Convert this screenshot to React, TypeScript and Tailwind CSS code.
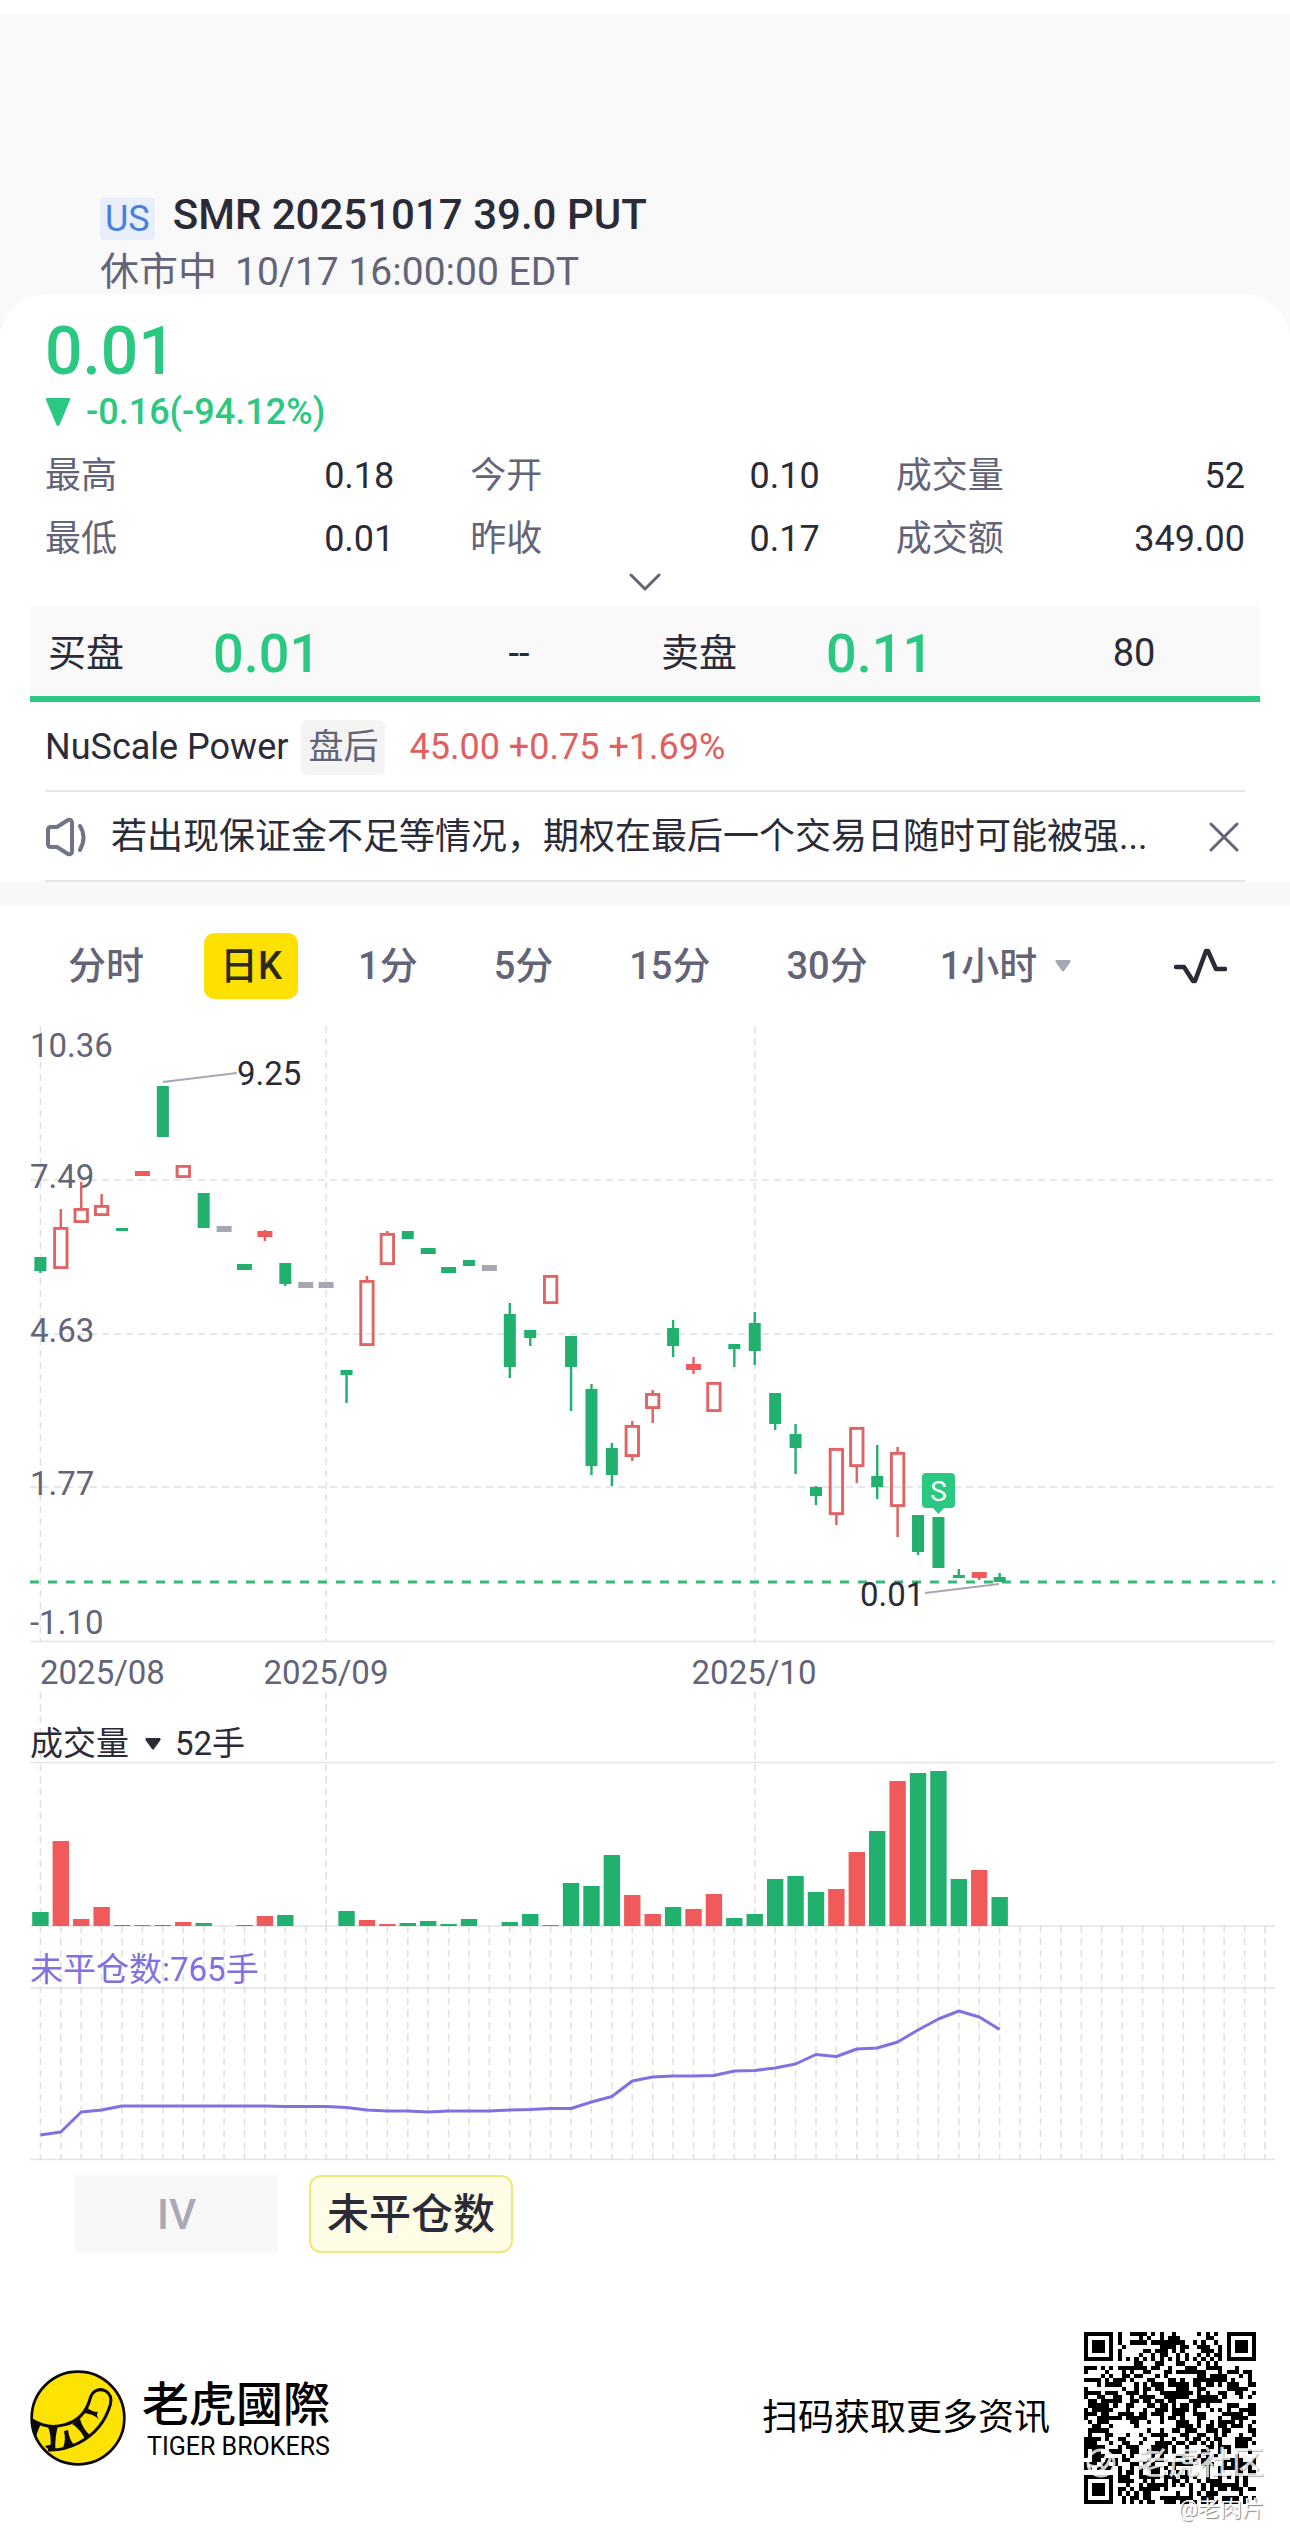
import { useState } from "react";

const INK = "#2b2b38";
const MUTED = "#646478";
const UP = "#f05a5a";
const UP_LINE = "#e16464";
const DOWN = "#21b06e";
const FLAT = "#a5a8b3";
const GRID = "#dedfe2";

type Tone = "up" | "down" | "flat";

interface Candle {
  tone: Tone;
  high: number;
  top: number;
  bottom: number;
  low: number;
  thin?: boolean; // body too short to be drawn hollow
}

const c = (tone: Tone, high: number, top: number, bottom: number, low: number, thin = false): Candle => ({
  tone, high, top, bottom, low, thin,
});

// y positions inside the chart's viewBox, one entry per trading day
const candles: Candle[] = [
  c("down", 1257, 1257, 1271, 1273),
  c("up", 1209, 1227, 1269, 1269),
  c("up", 1182, 1208, 1223, 1223),
  c("up", 1194, 1205, 1216, 1216),
  c("down", 1228, 1228, 1231, 1231),
  c("up", 1171, 1171, 1176, 1176, true),
  c("down", 1086, 1086, 1137, 1137),
  c("up", 1165, 1165, 1178, 1178),
  c("down", 1193, 1193, 1228, 1228),
  c("flat", 1226, 1226, 1232, 1232, true),
  c("down", 1264, 1264, 1270, 1270, true),
  c("up", 1230, 1231, 1237, 1241, true),
  c("down", 1263, 1263, 1284, 1286),
  c("flat", 1282, 1282, 1288, 1288, true),
  c("flat", 1282, 1282, 1288, 1288, true),
  c("down", 1370, 1370, 1375, 1403),
  c("up", 1276, 1280, 1346, 1346),
  c("up", 1231, 1233, 1265, 1265),
  c("down", 1231, 1231, 1239, 1239),
  c("down", 1248, 1248, 1254, 1254, true),
  c("down", 1267, 1267, 1273, 1273, true),
  c("down", 1260, 1260, 1266, 1266),
  c("flat", 1265, 1265, 1271, 1271, true),
  c("down", 1303, 1314, 1367, 1378),
  c("down", 1330, 1330, 1338, 1346),
  c("up", 1275, 1275, 1304, 1304),
  c("down", 1336, 1336, 1367, 1411),
  c("down", 1384, 1389, 1466, 1475),
  c("down", 1443, 1448, 1475, 1486),
  c("up", 1421, 1425, 1457, 1461),
  c("up", 1390, 1393, 1409, 1423),
  c("down", 1320, 1328, 1346, 1357),
  c("up", 1357, 1364, 1370, 1374, true),
  c("up", 1382, 1382, 1412, 1412),
  c("down", 1344, 1344, 1349, 1367),
  c("down", 1312, 1323, 1351, 1365),
  c("down", 1393, 1393, 1424, 1430),
  c("down", 1424, 1434, 1448, 1474),
  c("down", 1486, 1487, 1496, 1505),
  c("up", 1448, 1448, 1515, 1525),
  c("up", 1427, 1427, 1467, 1483),
  c("down", 1445, 1476, 1487, 1499),
  c("up", 1447, 1452, 1507, 1537),
  c("down", 1515, 1515, 1552, 1555),
  c("down", 1517, 1517, 1568, 1568),
  c("down", 1569, 1575, 1578, 1578),
  c("up", 1572, 1572, 1578, 1580, true),
  c("down", 1573, 1577, 1582, 1582),
];

const volumes = [
  14, 85, 7, 19, 1, 1, 1, 4, 3, 0, 1, 10, 11, 0, 0, 15, 6, 2, 3, 5, 2, 7, 0, 4,
  12, 1, 43, 40, 71, 31, 12, 19, 17, 32, 8, 12, 47, 50, 34, 37, 74, 95, 145, 153, 155, 47, 56, 29,
];

const openInterest = [
  2135, 2132, 2112, 2110, 2106, 2106, 2106, 2106, 2106, 2106, 2106, 2106, 2106.5, 2106.5, 2106.5, 2107.5,
  2110, 2111, 2111, 2112, 2111, 2111, 2111, 2110, 2109.5, 2108.5, 2108.5, 2102, 2096.5, 2081, 2077, 2076,
  2076, 2075.5, 2071, 2070.5, 2068, 2064, 2054.5, 2056.5, 2049, 2048, 2042, 2030, 2019, 2011, 2017, 2029.5,
];

const slotX = (i: number) => 40.4 + i * 20.41;
const slots = Array.from({ length: 61 }, (_, i) => i);
const monthSlots = [0, 14, 35];

const stats = [
  { label: "最高", value: "0.18" },
  { label: "今开", value: "0.10" },
  { label: "成交量", value: "52" },
  { label: "最低", value: "0.01" },
  { label: "昨收", value: "0.17" },
  { label: "成交额", value: "349.00" },
];

const periods = ["分时", "日K", "1分", "5分", "15分", "30分"];

const notice = "若出现保证金不足等情况\uFF0C期权在最后一个交易日随时可能被强...";

function CandleMark({ candle, x }: { candle: Candle; x: number }) {
  const { tone, high, top, bottom, low, thin } = candle;
  if (tone === "up" && !thin) {
    return (
      <g stroke={UP_LINE} fill="none">
        <path d={`M${x} ${high}V${top}M${x} ${bottom}V${low}`} strokeWidth={2.5} />
        <rect x={x - 6.2} y={top + 1.4} width={12.4} height={bottom - top - 2.8} strokeWidth={2.9} />
      </g>
    );
  }
  const color = tone === "up" ? UP : tone === "down" ? DOWN : FLAT;
  const half = thin ? 7.5 : 6;
  return (
    <g fill={color}>
      <rect x={x - 1.2} y={high} width={2.4} height={low - high} />
      <rect x={x - half} y={top} width={half * 2} height={bottom - top} />
    </g>
  );
}

function Charts() {
  return (
    <svg viewBox="0 1020 1290 1144" className="block w-full" fontSize={33} fill={MUTED}>
      {/* price grid */}
      <g stroke={GRID} strokeWidth={1.5} strokeDasharray="7 5">
        {monthSlots.map((i) => (
          <path key={i} d={`M${slotX(i)} 1026V1641M${slotX(i)} 1692V1926`} />
        ))}
        <path d="M30 1180H1275M30 1334H1275M30 1487H1275" />
      </g>
      <path d="M30 1641.5H1275M30 1762.5H1275M30 1926H1275M30 1988H1275M30 2159.5H1275" stroke="#e3e4e6" strokeWidth={1.3} />

      <text x={30} y={1057}>10.36</text>
      <text x={30} y={1188}>7.49</text>
      <text x={30} y={1342}>4.63</text>
      <text x={30} y={1495}>1.77</text>
      <text x={30} y={1634}>-1.10</text>
      <text x={40} y={1684}>2025/08</text>
      <text x={326} y={1684} textAnchor="middle">2025/09</text>
      <text x={754} y={1684} textAnchor="middle">2025/10</text>

      <path d="M30 1582H1275" stroke="#35b87b" strokeWidth={3} strokeDasharray="9 9" />
      {candles.map((candle, i) => (
        <CandleMark key={i} candle={candle} x={slotX(i)} />
      ))}

      <path d="M163 1082L237 1073M925 1593L999 1584" stroke={FLAT} strokeWidth={2.2} />
      <text x={237} y={1085} fill={INK}>9.25</text>
      <text x={860} y={1606} fill={INK}>0.01</text>

      {/* sell marker */}
      <path d="M926 1473H951Q955 1473 955 1477V1504Q955 1508 951 1508H944L938.500 1514L933 1508H926Q922 1508 922 1504V1477Q922 1473 926 1473Z" fill="#2bc882" />
      <text x={938.5} y={1501} fontSize={28} fill="#fff" textAnchor="middle">S</text>

      {/* volume */}
      {volumes.map((v, i) => (
        <rect key={i} x={slotX(i) - 8.2} y={1926 - v} width={16.4} height={v} fill={candles[i].tone === "up" ? UP : DOWN} />
      ))}

      {/* open interest */}
      <g stroke={GRID} strokeWidth={1.5} strokeDasharray="7 5">
        {slots.map((i) => (
          <path key={i} d={`M${slotX(i)} 1926V2160`} />
        ))}
      </g>
      <text x={30} y={1981} fill="#8070e0">未平仓数:765手</text>
      <polyline
        points={openInterest.map((y, i) => `${slotX(i)},${y}`).join(" ")}
        fill="none"
        stroke="#8070e0"
        strokeWidth={3}
        strokeLinejoin="round"
      />
    </svg>
  );
}

function TigerLogo() {
  return (
    <svg viewBox="90 90 288 288" className="size-24">
      <circle cx="234" cy="234" r="139" fill="#fce303" stroke="#0b0808" strokeWidth="8" />
      <path
        d="M97 240C125 258 160 264 195 254C240 242 262 208 271 174C278 150 300 144 317 153C333 162 335 178 331 194C316 246 282 285 236 309C208 323 178 331 148 330"
        fill="none"
        stroke="#0b0808"
        strokeWidth="9"
        strokeLinecap="round"
      />
      <g fill="#0b0808">
        <path d="M94 236L121 256C114 270 110 282 107 296C99 280 94 260 94 236Z" />
        <path d="M143 258L174 256C168 280 165 302 166 328L148 330L134 318L152 314C153 294 150 274 143 258Z" />
        <path d="M192 274L204 270C206 288 212 304 222 314L206 321L189 324C196 306 196 290 192 274Z" />
        <path d="M216 252L240 236C246 258 258 276 272 286L256 300C250 284 236 264 216 252Z" />
        <path d="M248 220L262 203C272 212 282 216 294 216C289 221 290 230 297 238C284 226 266 219 248 220Z" />
      </g>
    </svg>
  );
}

const QR_SIZE = 41;

function qrPath() {
  let seed = 20251017;
  let d = "";
  const ring = (dx: number, dy: number) => Math.max(Math.abs(dx), Math.abs(dy));
  for (let y = 0; y < QR_SIZE; y++) {
    for (let x = 0; x < QR_SIZE; x++) {
      seed = (Math.imul(seed, 1664525) + 1013904223) >>> 0;
      let on = (seed >>> 16) % 100 < 52;
      const finders = [ring(x - 3, y - 3), ring(x - 37, y - 3), ring(x - 3, y - 37)];
      const near = Math.min(...finders);
      if (near <= 4) on = near !== 4 && near !== 2;
      else if (ring(x - 34, y - 34) <= 2) on = ring(x - 34, y - 34) !== 1;
      else if (x === 6 || y === 6) on = (x + y) % 2 === 0;
      if (on) d += `M${x} ${y}h1v1h-1z`;
    }
  }
  return d;
}

function QrCode() {
  return (
    <svg viewBox="0 0 41 41" className="size-43" shapeRendering="crispEdges">
      <path d={qrPath()} fill="#000" />
    </svg>
  );
}

export default function App() {
  const [period, setPeriod] = useState("日K");
  const [indicator, setIndicator] = useState("未平仓数");
  const [noticeOpen, setNoticeOpen] = useState(true);

  return (
    <main className="bg-white pt-[15px] font-['Roboto','Noto_Sans_CJK_SC',sans-serif] text-[#2b2b38]">
      <div className="bg-[#f9f9f9]">
        <header className="px-[100px] pt-[179px]">
          <div className="flex items-end gap-[18px]">
            <span className="rounded bg-[#e8effb] px-[5px] text-[36px] leading-[42px] text-[#4a7fe0]">US</span>
            <h1 className="mb-1 text-[42px] font-medium leading-[42px]">SMR 20251017 39.0 PUT</h1>
          </div>
          <p className="mt-2 flex h-[46px] gap-[18px] text-[39px] leading-[48px] text-[#646478]">
            <span>休市中</span>
            <span>10/17 16:00:00 EDT</span>
          </p>
        </header>

        <section className="rounded-t-[46px] bg-white pt-[22px]">
          <div className="px-[45px] text-[#2bc882]">
            <p className="text-[66px] font-medium leading-[72px]">0.01</p>
            <p className="mt-0.5 flex items-center gap-[15px] text-[36px] font-medium leading-[44px]">
              <svg viewBox="0 0 26 30" className="h-[30px] w-[26px]" fill="currentColor">
                <path d="M2 1H24Q26 1 25 3L14.500 28Q13 30 11.500 28L1 3Q0 1 2 1Z" />
              </svg>
              -0.16(-94.12%)
            </p>
          </div>

          <dl className="mt-5 grid grid-cols-3 gap-x-[76px] gap-y-[19px] px-[45px] text-[36px] leading-[44px]">
            {stats.map((s) => (
              <div key={s.label} className="flex h-[44px] justify-between">
                <dt className="text-[#646478]">{s.label}</dt>
                <dd>{s.value}</dd>
              </div>
            ))}
          </dl>

          <button type="button" aria-label="展开" className="mx-auto mt-3 block">
            <svg viewBox="0 0 32 18" className="h-[18px] w-8" fill="none" stroke={MUTED} strokeWidth="3" strokeLinecap="round" strokeLinejoin="round">
              <path d="M2 2L16 16L30 2" />
            </svg>
          </button>

          {/* best bid / ask */}
          <div className="mx-[30px] mt-[15px] grid h-24 grid-cols-2 border-b-[6px] border-[#2bc882] bg-[#f9f9f9] pt-1 text-[38px]">
            <div className="flex items-center pl-[18px]">
              <span className="w-[165px]">买盘</span>
              <span className="text-[54px] font-medium text-[#2bc882]">0.01</span>
              <span className="ml-auto mr-12 w-[156px] text-center">--</span>
            </div>
            <div className="flex items-center pl-4">
              <span className="w-[165px]">卖盘</span>
              <span className="text-[54px] font-medium text-[#2bc882]">0.11</span>
              <span className="ml-auto mr-12 w-[156px] text-center">80</span>
            </div>
          </div>

          <div className="mx-[45px] flex h-[90px] items-center border-b-2 border-[#e6e6e8] pt-0.5 text-[36px]">
            <span>NuScale Power</span>
            <span className="ml-[13px] rounded-md bg-[#f4f4f5] px-[7px] text-[35px] leading-[55px] text-[#646478]">盘后</span>
            <span className="ml-6 text-[#e06060]">45.00 +0.75 +1.69%</span>
          </div>

          {noticeOpen && (
            <div className="mx-[45px] flex h-[90px] items-center border-b-2 border-[#e6e6e8] pt-0.5">
              <svg viewBox="0 0 44 40" className="h-10 w-11 shrink-0" fill="none" stroke="#707488" strokeWidth="4" strokeLinecap="round" strokeLinejoin="round">
                <path d="M6 10H12L23 3Q27 2 27 6V34Q27 38 23 37L12 30H6Q3 30 3 27V13Q3 10 6 10Z" />
                <path d="M35 9Q42 20 35 33" />
              </svg>
              <p className="ml-[22px] whitespace-nowrap text-[36px]">{notice}</p>
              <button type="button" aria-label="关闭" onClick={() => setNoticeOpen(false)} className="ml-auto mr-1.5">
                <svg viewBox="0 0 30 30" className="size-[30px]" stroke={MUTED} strokeWidth="3" strokeLinecap="round">
                  <path d="M2 2L28 28M28 2L2 28" />
                </svg>
              </button>
            </div>
          )}
        </section>
      </div>
      <div className="h-6 bg-[#f8f8f8]" />

      <nav className="flex h-[114px] items-center gap-11 pl-[52px] pr-[63px] pt-1.5 text-[38px] font-medium text-[#646478]">
        {periods.map((p) => (
          <button
            key={p}
            type="button"
            onClick={() => setPeriod(p)}
            className={`h-[66px] rounded-[10px] px-4 ${p === period ? "bg-[#fee002] text-[#2b2b1c]" : ""}`}
          >
            {p}
          </button>
        ))}
        <button type="button" className="flex items-center gap-[18px] pl-3">
          1小时
          <svg viewBox="0 0 16 12" className="h-3 w-4" fill={FLAT}>
            <path d="M1 0H15Q16 1 15.500 2L9 11Q8 12 7 11L0.500 2Q0 1 1 0Z" />
          </svg>
        </button>
        <button type="button" aria-label="指标" className="ml-auto">
          <svg viewBox="0 0 54 36" className="h-9 w-[54px]" fill="none" stroke={INK} strokeWidth="4.500" strokeLinecap="round" strokeLinejoin="round">
            <path d="M3 19H11L20 33H22L33 3H35L43 21H52" />
          </svg>
        </button>
      </nav>

      <div className="relative">
        <Charts />
        <button type="button" className="absolute left-[30px] top-[61.4%] flex items-center text-[33px] leading-[44px]">
          成交量
          <svg viewBox="0 0 16 12" className="ml-4 mr-3.5 h-3 w-4" fill={INK}>
            <path d="M1 0H15Q16 1 15.500 2L9 11Q8 12 7 11L0.500 2Q0 1 1 0Z" />
          </svg>
          52手
        </button>
      </div>

      <div className="mt-[11px] flex gap-[31px] pl-[75px] text-[42px] font-medium">
        <button type="button" onClick={() => setIndicator("IV")} className="h-[78px] w-[203px] bg-[#f8f8f9] text-[#a8a9b4]">
          IV
        </button>
        <button
          type="button"
          onClick={() => setIndicator("未平仓数")}
          className={`h-[78px] w-[204px] rounded-xl border-2 ${indicator === "未平仓数" ? "border-[#f0e878] bg-[#fffde6]" : "border-transparent bg-[#f8f8f9]"}`}
        >
          未平仓数
        </button>
      </div>

      <footer className="mt-[79px] flex items-center pb-[34px] pl-[30px] pr-[34px]">
        <TigerLogo />
        <div className="ml-4 pt-1.5 text-black">
          <p className="font-['Roboto','Noto_Sans_CJK_TC',sans-serif] text-[47px] font-medium leading-[52px]">老虎國際</p>
          <p className="pl-[5px] text-[25px] leading-[32px]">TIGER BROKERS</p>
        </div>
        <p className="ml-auto mr-[34px] text-[36px] text-black">扫码获取更多资讯</p>
        <div className="relative">
          <QrCode />
          <div className="absolute -right-2 top-[109px] flex items-center gap-5 whitespace-nowrap text-[32px] font-medium leading-[44px] text-white/80 [text-shadow:1px_1px_1px_rgba(0,0,0,0.3)]">
            <svg viewBox="0 0 30 30" className="size-[30px]" fill="none" stroke="currentColor" strokeWidth="3">
              <circle cx="15" cy="15" r="13" />
              <path d="M2 17C14 22 17 14 20 8Q24 6 24 11C22 18 16 24 7 25M9 19V24M15 17L18 22" />
            </svg>
            老虎社区
          </div>
          <p className="absolute -right-2 top-[161px] whitespace-nowrap text-[22px] leading-[32px] text-white [text-shadow:1px_1px_1px_rgba(0,0,0,0.5)]">@老肉片</p>
        </div>
      </footer>
    </main>
  );
}
